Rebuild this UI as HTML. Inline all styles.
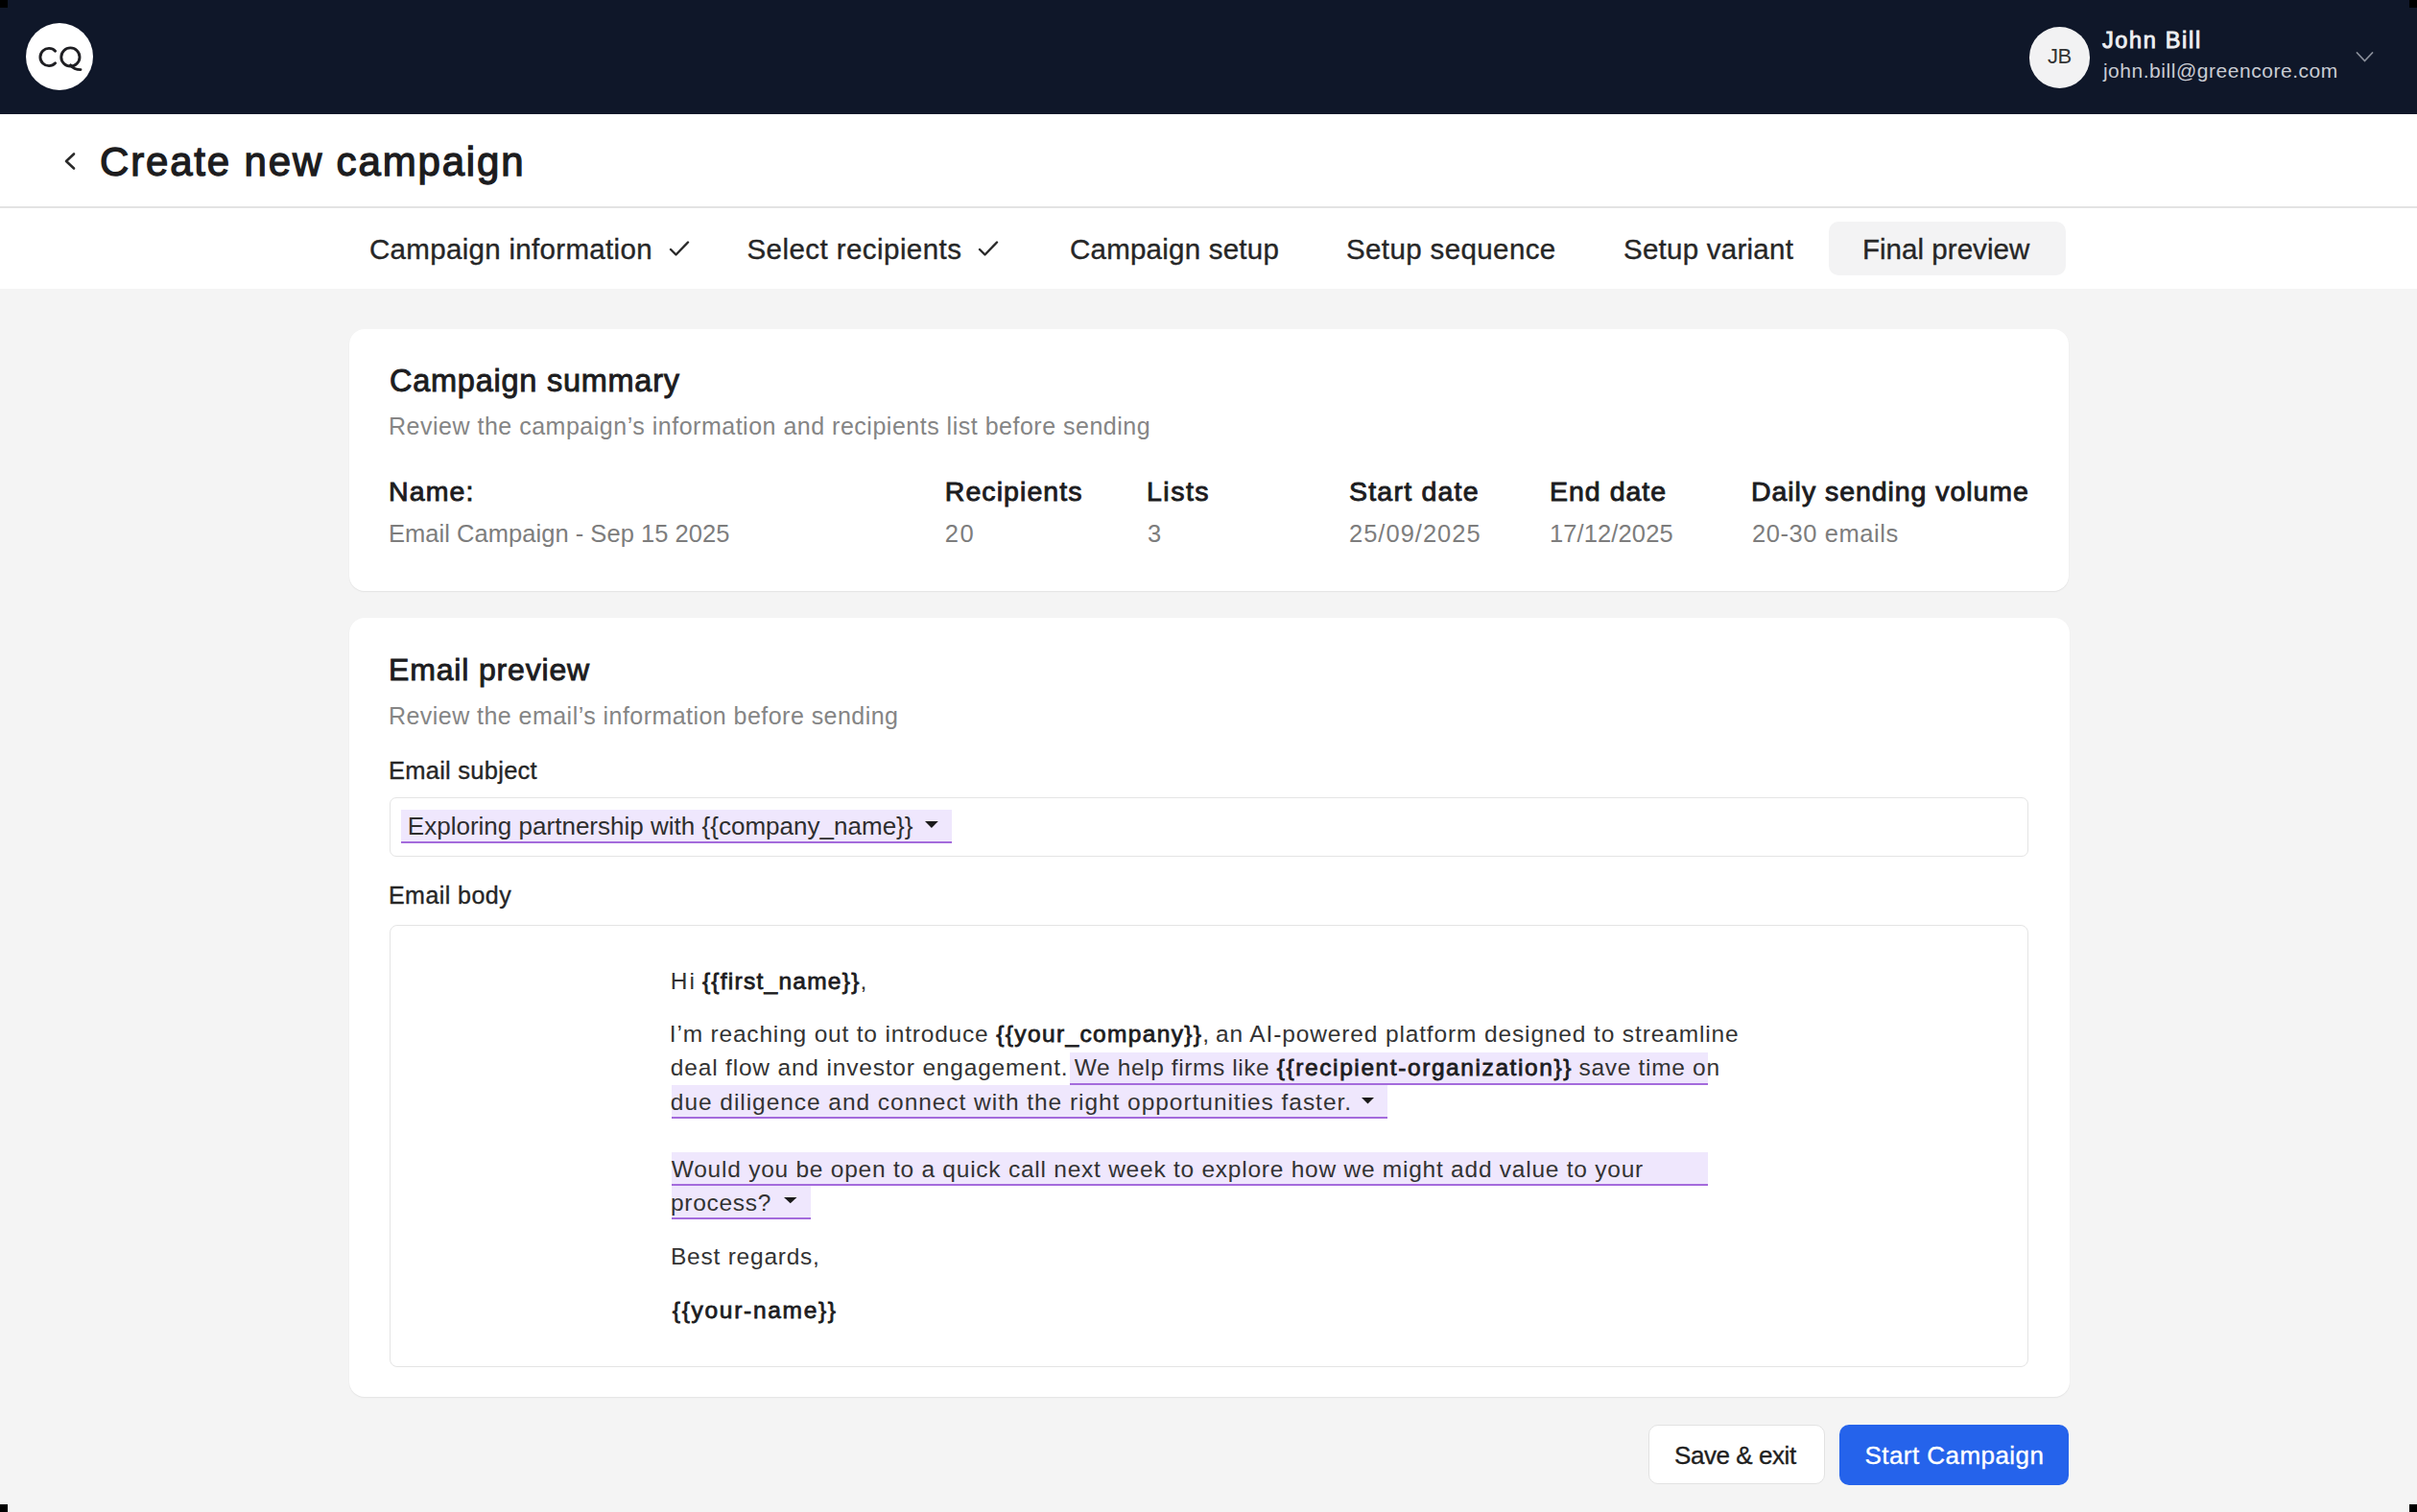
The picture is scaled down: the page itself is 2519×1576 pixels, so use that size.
<!DOCTYPE html>
<html><head><meta charset="utf-8"><title>Create new campaign</title><style>
*{margin:0;padding:0;box-sizing:border-box}
html,body{width:2519px;height:1576px;overflow:hidden;background:#f4f4f4;font-family:"Liberation Sans",sans-serif}
.abs{position:absolute}
.t{position:absolute;white-space:pre}
.t b{font-weight:400;color:#1c1c1e;-webkit-text-stroke:0.8px #1c1c1e}
</style></head>
<body>

<div class="abs" style="left:0;top:0;width:2519px;height:119px;background:#0f1729"></div>
<div class="abs" style="left:27px;top:24px;width:70px;height:70px;border-radius:50%;background:#ffffff"></div>
<svg class="abs" style="left:0;top:0" width="120" height="119" viewBox="0 0 120 119"><path d="M57.6 53.2 A9.1 9.1 0 1 0 57.6 65.8" fill="none" stroke="#1f1f23" stroke-width="2.9" stroke-linecap="round"/><circle cx="73.4" cy="59.5" r="9.6" fill="none" stroke="#1f1f23" stroke-width="2.9"/><path d="M73.5 67.8 Q77 72.6 84 72.6" fill="none" stroke="#1f1f23" stroke-width="2.9" stroke-linecap="round"/></svg>
<div class="abs" style="left:2114.5px;top:28px;width:63.5px;height:63.5px;border-radius:50%;background:#f2f2f3"></div>
<svg class="abs" style="left:2450px;top:48px" width="30" height="22" viewBox="0 0 30 22"><path d="M6.5 7 L14.5 15.5 L22.5 7" fill="none" stroke="#8a8f9a" stroke-width="1.8" stroke-linecap="round" stroke-linejoin="round"/></svg>
<div class="abs" style="left:0;top:119px;width:2519px;height:182px;background:#ffffff"></div>
<div class="abs" style="left:0;top:215px;width:2519px;height:1.5px;background:#e3e3e3"></div>
<svg class="abs" style="left:60px;top:152px" width="26" height="32" viewBox="0 0 26 32"><path d="M17 8.5 L9 16 L17 23.5" fill="none" stroke="#2a2a2a" stroke-width="2.6" stroke-linecap="round" stroke-linejoin="round"/></svg>
<svg class="abs" style="left:692px;top:244px" width="32" height="30" viewBox="0 0 32 30"><path d="M7 16 L12.5 21.5 L25 8.5" fill="none" stroke="#2a2a2a" stroke-width="2.4" stroke-linecap="round" stroke-linejoin="round"/></svg>
<svg class="abs" style="left:1014px;top:244px" width="32" height="30" viewBox="0 0 32 30"><path d="M7 16 L12.5 21.5 L25 8.5" fill="none" stroke="#2a2a2a" stroke-width="2.4" stroke-linecap="round" stroke-linejoin="round"/></svg>
<div class="abs" style="left:1906px;top:230.5px;width:247px;height:56.5px;border-radius:10px;background:#f3f3f4"></div>
<div class="abs" style="left:363.5px;top:343px;width:1792.5px;height:273px;border-radius:16px;background:#fff;box-shadow:0 1px 1.5px rgba(0,0,0,0.07)"></div>
<div class="abs" style="left:363.5px;top:643.5px;width:1793px;height:812px;border-radius:16px;background:#fff;box-shadow:0 1px 1.5px rgba(0,0,0,0.07)"></div>
<div class="abs" style="left:406px;top:830.5px;width:1708px;height:62px;border-radius:7px;border:1.5px solid #e4e4e4;background:#fff"></div>
<div class="abs" style="left:417.7px;top:844px;width:574px;height:35px;background:#efe7fd;border-bottom:2px solid #a46bdc"></div>
<svg class="abs" style="left:964.2px;top:856px" width="14" height="8" viewBox="0 0 14 8"><path d="M0 0 L13.8 0 L6.9 7 Z" fill="#1a1a1a"/></svg>
<div class="abs" style="left:406px;top:963.7px;width:1708px;height:461px;border-radius:8px;border:1.5px solid #e4e4e4;background:#fff"></div>
<div class="abs" style="left:1114.8px;top:1096.5px;width:664.8px;height:34.6px;background:#efe7fd;border-bottom:2px solid #a46bdc"></div>
<div class="abs" style="left:699.8px;top:1131px;width:746px;height:34.8px;background:#efe7fd;border-bottom:2px solid #a46bdc"></div>
<svg class="abs" style="left:1419px;top:1143.5px" width="14" height="8" viewBox="0 0 14 8"><path d="M0 0 L13 0 L6.5 6.6 Z" fill="#1a1a1a"/></svg>
<div class="abs" style="left:699.8px;top:1201px;width:1080px;height:35px;background:#efe7fd;border-bottom:2px solid #a46bdc"></div>
<div class="abs" style="left:699.8px;top:1236px;width:145px;height:35px;background:#efe7fd;border-bottom:2px solid #a46bdc"></div>
<svg class="abs" style="left:817.2px;top:1248.3px" width="14" height="8" viewBox="0 0 14 8"><path d="M0 0 L13.5 0 L6.75 6.3 Z" fill="#1a1a1a"/></svg>
<div class="abs" style="left:1718px;top:1485.3px;width:183.5px;height:62px;border-radius:10px;border:1.5px solid #e2e2e2;background:#fff"></div>
<div class="abs" style="left:1917px;top:1485px;width:239px;height:62.6px;border-radius:10px;background:#2563eb"></div>
<div class="abs" style="left:0;top:0;width:8px;height:8px;background:#000"></div>
<div class="abs" style="left:2511px;top:0;width:8px;height:8px;background:#000"></div>
<div class="abs" style="left:0;top:1568px;width:8px;height:8px;background:#000"></div>
<div class="abs" style="left:2511px;top:1568px;width:8px;height:8px;background:#000"></div>

<div id="jb" class="t" style="left:2134.00px;top:47.58px;font-size:22px;line-height:22px;font-weight:400;color:#333333;letter-spacing:-0.600px">JB</div>
<div id="jname" class="t" style="left:2190.90px;top:30.91px;font-size:23.5px;line-height:23.5px;font-weight:400;color:#eeeff2;letter-spacing:1.675px;-webkit-text-stroke:0.9px #eeeff2">John Bill</div>
<div id="jmail" class="t" style="left:2191.90px;top:62.62px;font-size:21px;line-height:21px;font-weight:400;color:#c9ccd3;letter-spacing:0.536px">john.bill@greencore.com</div>
<div id="title" class="t" style="left:104.00px;top:148.15px;font-size:42px;line-height:42px;font-weight:400;color:#1c1c1e;letter-spacing:1.833px;-webkit-text-stroke:1.3px #1c1c1e">Create new campaign</div>
<div id="tab1" class="t" style="left:385.00px;top:244.73px;font-size:29.5px;line-height:29.5px;font-weight:400;color:#262626;letter-spacing:0.316px;-webkit-text-stroke:0.35px #262626">Campaign information</div>
<div id="tab2" class="t" style="left:778.50px;top:244.73px;font-size:29.5px;line-height:29.5px;font-weight:400;color:#262626;letter-spacing:0.438px;-webkit-text-stroke:0.35px #262626">Select recipients</div>
<div id="tab3" class="t" style="left:1115.00px;top:244.73px;font-size:29.5px;line-height:29.5px;font-weight:400;color:#262626;letter-spacing:0.231px;-webkit-text-stroke:0.35px #262626">Campaign setup</div>
<div id="tab4" class="t" style="left:1403.00px;top:244.73px;font-size:29.5px;line-height:29.5px;font-weight:400;color:#262626;letter-spacing:0.385px;-webkit-text-stroke:0.35px #262626">Setup sequence</div>
<div id="tab5" class="t" style="left:1692.00px;top:244.73px;font-size:29.5px;line-height:29.5px;font-weight:400;color:#262626;letter-spacing:0.250px;-webkit-text-stroke:0.35px #262626">Setup variant</div>
<div id="tab6" class="t" style="left:1940.90px;top:244.73px;font-size:29.5px;line-height:29.5px;font-weight:400;color:#262626;letter-spacing:0.050px;-webkit-text-stroke:0.35px #262626">Final preview</div>
<div id="cs_t" class="t" style="left:406.00px;top:381.29px;font-size:32.5px;line-height:32.5px;font-weight:400;color:#1c1c1e;letter-spacing:0.747px;-webkit-text-stroke:0.9px #1c1c1e">Campaign summary</div>
<div id="cs_s" class="t" style="left:405.00px;top:432.34px;font-size:25px;line-height:25px;font-weight:400;color:#858585;letter-spacing:0.507px">Review the campaign’s information and recipients list before sending</div>
<div id="h_name" class="t" style="left:405.00px;top:497.87px;font-size:28.5px;line-height:28.5px;font-weight:400;color:#1c1c1e;letter-spacing:1.150px;-webkit-text-stroke:0.9px #1c1c1e">Name:</div>
<div id="h_rec" class="t" style="left:984.80px;top:497.87px;font-size:28.5px;line-height:28.5px;font-weight:400;color:#1c1c1e;letter-spacing:1.067px;-webkit-text-stroke:0.9px #1c1c1e">Recipients</div>
<div id="h_lists" class="t" style="left:1195.00px;top:497.87px;font-size:28.5px;line-height:28.5px;font-weight:400;color:#1c1c1e;letter-spacing:1.500px;-webkit-text-stroke:0.9px #1c1c1e">Lists</div>
<div id="h_start" class="t" style="left:1406.00px;top:497.87px;font-size:28.5px;line-height:28.5px;font-weight:400;color:#1c1c1e;letter-spacing:1.222px;-webkit-text-stroke:0.9px #1c1c1e">Start date</div>
<div id="h_end" class="t" style="left:1615.00px;top:497.87px;font-size:28.5px;line-height:28.5px;font-weight:400;color:#1c1c1e;letter-spacing:1.000px;-webkit-text-stroke:0.9px #1c1c1e">End date</div>
<div id="h_daily" class="t" style="left:1825.00px;top:497.87px;font-size:28.5px;line-height:28.5px;font-weight:400;color:#1c1c1e;letter-spacing:0.947px;-webkit-text-stroke:0.9px #1c1c1e">Daily sending volume</div>
<div id="v_name" class="t" style="left:405.00px;top:544.21px;font-size:25.5px;line-height:25.5px;font-weight:400;color:#7d7d7d;letter-spacing:0.037px">Email Campaign - Sep 15 2025</div>
<div id="v_rec" class="t" style="left:984.80px;top:544.21px;font-size:25.5px;line-height:25.5px;font-weight:400;color:#7d7d7d;letter-spacing:1.600px">20</div>
<div id="v_lists" class="t" style="left:1196.00px;top:544.21px;font-size:25.5px;line-height:25.5px;font-weight:400;color:#7d7d7d;letter-spacing:0.000px">3</div>
<div id="v_start" class="t" style="left:1406.00px;top:544.21px;font-size:25.5px;line-height:25.5px;font-weight:400;color:#7d7d7d;letter-spacing:1.000px">25/09/2025</div>
<div id="v_end" class="t" style="left:1615.00px;top:544.21px;font-size:25.5px;line-height:25.5px;font-weight:400;color:#7d7d7d;letter-spacing:0.111px">17/12/2025</div>
<div id="v_daily" class="t" style="left:1826.00px;top:544.21px;font-size:25.5px;line-height:25.5px;font-weight:400;color:#7d7d7d;letter-spacing:0.564px">20-30 emails</div>
<div id="ep_t" class="t" style="left:405.00px;top:682.11px;font-size:32px;line-height:32px;font-weight:400;color:#1c1c1e;letter-spacing:0.833px;-webkit-text-stroke:0.9px #1c1c1e">Email preview</div>
<div id="ep_s" class="t" style="left:405.00px;top:733.84px;font-size:25px;line-height:25px;font-weight:400;color:#858585;letter-spacing:0.455px">Review the email’s information before sending</div>
<div id="l_subj" class="t" style="left:405.00px;top:791.41px;font-size:25.5px;line-height:25.5px;font-weight:400;color:#262626;letter-spacing:0.250px;-webkit-text-stroke:0.35px #262626">Email subject</div>
<div id="subj" class="t" style="left:424.80px;top:848.39px;font-size:26px;line-height:26px;font-weight:400;color:#2e2e2e;letter-spacing:0.014px">Exploring partnership with {{company_name}}</div>
<div id="l_body" class="t" style="left:405.00px;top:920.84px;font-size:25px;line-height:25px;font-weight:400;color:#262626;letter-spacing:0.444px;-webkit-text-stroke:0.35px #262626">Email body</div>
<div id="b1a" class="t" style="left:698.80px;top:1010.66px;font-size:24.5px;line-height:24.5px;font-weight:400;color:#333333;letter-spacing:2.000px">Hi</div>
<div id="b1b" class="t" style="left:731.90px;top:1010.66px;font-size:24.5px;line-height:24.5px;font-weight:400;color:#333333;letter-spacing:1.257px"><b>{{first_name}}</b>,</div>
<div id="b2a" class="t" style="left:697.80px;top:1066.16px;font-size:24.5px;line-height:24.5px;font-weight:400;color:#333333;letter-spacing:0.814px">I’m reaching out to introduce</div>
<div id="b2b" class="t" style="left:1038.30px;top:1066.16px;font-size:24.5px;line-height:24.5px;font-weight:400;color:#333333;letter-spacing:1.350px"><b>{{your_company}}</b>,</div>
<div id="b2c" class="t" style="left:1267.00px;top:1066.16px;font-size:24.5px;line-height:24.5px;font-weight:400;color:#333333;letter-spacing:0.864px">an AI-powered platform designed to streamline</div>
<div id="b3a" class="t" style="left:698.80px;top:1100.86px;font-size:24.5px;line-height:24.5px;font-weight:400;color:#333333;letter-spacing:0.818px">deal flow and investor engagement.</div>
<div id="b3b" class="t" style="left:1119.80px;top:1100.86px;font-size:24.5px;line-height:24.5px;font-weight:400;color:#333333;letter-spacing:0.588px">We help firms like</div>
<div id="b3c" class="t" style="left:1330.80px;top:1100.86px;font-size:24.5px;line-height:24.5px;font-weight:400;color:#333333;letter-spacing:1.584px"><b>{{recipient-organization}}</b></div>
<div id="b3d" class="t" style="left:1645.50px;top:1100.86px;font-size:24.5px;line-height:24.5px;font-weight:400;color:#333333;letter-spacing:0.691px">save time on</div>
<div id="b4" class="t" style="left:698.80px;top:1136.56px;font-size:24.5px;line-height:24.5px;font-weight:400;color:#333333;letter-spacing:0.954px">due diligence and connect with the right opportunities faster.</div>
<div id="b5" class="t" style="left:699.80px;top:1206.76px;font-size:24.5px;line-height:24.5px;font-weight:400;color:#333333;letter-spacing:0.757px">Would you be open to a quick call next week to explore how we might add value to your</div>
<div id="b6" class="t" style="left:699.00px;top:1241.56px;font-size:24.5px;line-height:24.5px;font-weight:400;color:#333333;letter-spacing:0.714px">process?</div>
<div id="b7" class="t" style="left:699.00px;top:1297.56px;font-size:24.5px;line-height:24.5px;font-weight:400;color:#333333;letter-spacing:0.767px">Best regards,</div>
<div id="b8" class="t" style="left:700.80px;top:1354.26px;font-size:24.5px;line-height:24.5px;font-weight:400;color:#1c1c1e;letter-spacing:1.700px"><b>{{your-name}}</b></div>
<div id="btn1" class="t" style="left:1745.00px;top:1503.79px;font-size:26px;line-height:26px;font-weight:400;color:#1f1f1f;letter-spacing:-0.440px;-webkit-text-stroke:0.35px #1f1f1f">Save &amp; exit</div>
<div id="btn2" class="t" style="left:1943.50px;top:1503.79px;font-size:26px;line-height:26px;font-weight:400;color:#ffffff;letter-spacing:0.446px;-webkit-text-stroke:0.35px #ffffff">Start Campaign</div>
</body></html>
